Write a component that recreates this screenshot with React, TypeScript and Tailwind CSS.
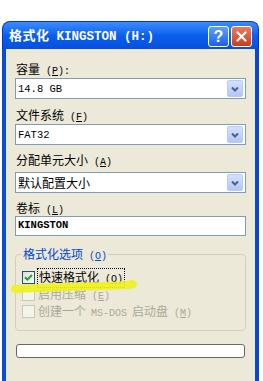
import type { ReactNode } from "react";

const cjk = '"Noto Sans CJK SC", "Noto Sans", sans-serif';
const mono = '"Liberation Mono", "Noto Sans CJK SC", monospace';

function Acc({ k, colon = false }: { k: string; colon?: boolean }) {
  return (
    <span className="text-[10px]" style={{ fontFamily: mono }}>
      {" ("}
      <span className="underline underline-offset-1">{k}</span>
      {")"}
      {colon ? ":" : ""}
    </span>
  );
}

function Label({ children }: { children: ReactNode }) {
  return (
    <div className="h-[14px] leading-[14px] text-[12px] text-black pl-[1px]" style={{ fontFamily: cjk }}>
      {children}
    </div>
  );
}

function Combo({ value, cjkText = false }: { value: string; cjkText?: boolean }) {
  return (
    <div className="flex items-center h-[21px] border border-[#7F9DB9] bg-white pl-[2px] pr-[2px]">
      <span
        className={cjkText ? "flex-1 text-[12px] leading-[14px]" : "flex-1 text-[10.5px] leading-[14px]"}
        style={{ fontFamily: cjkText ? cjk : mono }}
      >
        {value}
      </span>
      <div className="w-[16px] h-[17px] rounded-[2px] border border-[#B7CAF5] bg-gradient-to-b from-[#D5E1FD] to-[#B2C7F7] flex items-center justify-center">
        <svg width="8" height="6" viewBox="0 0 8 6">
          <path d="M1 1.5 L4 4.5 L7 1.5" fill="none" stroke="#4D6185" strokeWidth="2" />
        </svg>
      </div>
    </div>
  );
}

function Check({ checked = false, disabled = false }: { checked?: boolean; disabled?: boolean }) {
  return (
    <div
      className={`w-[13px] h-[13px] border flex items-center justify-center ${
        disabled ? "border-[#CAC8BB] bg-[#F5F4EA]" : "border-[#1C5180] bg-gradient-to-br from-[#DCDCD7] to-white"
      }`}
    >
      {checked && (
        <svg width="9" height="9" viewBox="0 0 9 9">
          <path d="M1 4.2 L3.4 6.6 L8 2" fill="none" stroke="#21A121" strokeWidth="2" />
        </svg>
      )}
    </div>
  );
}

export default function App() {
  return (
    <div className="w-[263px] h-[381px] bg-white overflow-hidden pt-[21px] pl-[2px] relative">
      <div className="w-[257px] flex flex-col">
        {/* title bar */}
        <div className="h-[28px] rounded-t-[8px] bg-gradient-to-b from-[#3B8CFF] via-[#0A5FEC] to-[#0550DE] flex items-center pl-[6px] pr-[6px] border-x border-t border-[#0831D9]">
          <div className="flex-1 flex items-baseline text-white font-bold">
            <span className="text-[13px] tracking-[0.5px]" style={{ fontFamily: cjk }}>
              格式化
            </span>
            <span className="text-[12.5px] ml-[7px]" style={{ fontFamily: mono }}>
              KINGSTON (H:)
            </span>
          </div>
          <div className="flex gap-[2px] mt-[2px]">
            <div className="w-[21px] h-[21px] rounded-[3px] border border-white bg-gradient-to-b from-[#5DA0FF] to-[#1E5FE6] flex items-center justify-center text-white text-[16px] font-bold leading-none" style={{ fontFamily: '"Liberation Sans", sans-serif' }}>
              ?
            </div>
            <div className="w-[21px] h-[21px] rounded-[3px] border border-white bg-gradient-to-b from-[#E97B5C] to-[#CC3A14] flex items-center justify-center">
              <svg width="11" height="11" viewBox="0 0 11 11">
                <path d="M1.5 1.5 L9.5 9.5 M9.5 1.5 L1.5 9.5" stroke="white" strokeWidth="2.2" strokeLinecap="round" />
              </svg>
            </div>
          </div>
        </div>

        {/* body */}
        <div className="h-[332px] border-x-[4px] border-l-[#0A4DD6] border-r-[#0A46CF] bg-[#ECE9D8] pt-[13px] px-[9px] flex flex-col">
          <Label>
            容量<Acc k="P" colon />
          </Label>
          <div className="mt-[2px]">
            <Combo value="14.8 GB" />
          </div>

          <div className="mt-[9px]">
            <Label>
              文件系统<Acc k="F" />
            </Label>
          </div>
          <div className="mt-[2px]">
            <Combo value="FAT32" />
          </div>

          <div className="mt-[8px]">
            <Label>
              分配单元大小<Acc k="A" />
            </Label>
          </div>
          <div className="mt-[5px]">
            <Combo value="默认配置大小" cjkText />
          </div>

          <div className="mt-[8px]">
            <Label>
              卷标<Acc k="L" />
            </Label>
          </div>
          <div className="mt-[1px] h-[20px] border border-[#7F9DB9] bg-white pl-[2px] flex items-center">
            <span className="text-[10.5px] font-bold" style={{ fontFamily: mono }}>
              KINGSTON
            </span>
          </div>

          {/* group box */}
          <div className="mt-[18px] h-[77px] rounded-[4px] border border-[#D0D0BF] relative pt-[14px] pl-[6px]">
            <div className="absolute -top-[8px] left-[6px] px-[1px] bg-[#ECE9D8] text-[#0046D5] text-[12px] leading-[14px]" style={{ fontFamily: cjk }}>
              格式化选项<Acc k="O" />
            </div>
            <div className="h-[17px] flex items-center gap-[2px]">
              <Check checked />
              <span className="border border-dotted border-black px-[1px] text-[12px] leading-[15px]" style={{ fontFamily: cjk }}>
                快速格式化<Acc k="Q" />
              </span>
            </div>
            <div className="h-[17px] flex items-center gap-[3px] text-[#ACA899]">
              <Check disabled />
              <span className="text-[12px] leading-[15px]" style={{ fontFamily: cjk }}>
                启用压缩<Acc k="E" />
              </span>
            </div>
            <div className="h-[17px] flex items-center gap-[3px] text-[#ACA899]">
              <Check disabled />
              <span className="text-[12px] leading-[15px]" style={{ fontFamily: cjk }}>
                创建一个
                <span className="text-[10px] mx-[5px]" style={{ fontFamily: mono }}>MS-DOS</span>
                启动盘<Acc k="M" />
              </span>
            </div>
          </div>

          {/* progress bar */}
          <div className="mt-[13px] h-[14px] mx-[1px] rounded-[3px] border border-[#686868] bg-white" />
        </div>
      </div>

      {/* yellow highlighter mark */}
      <svg className="absolute left-0 top-0 pointer-events-none" width="263" height="381">
        <path d="M15 289 Q 60 287 100 286 T 131 284" fill="none" stroke="#EEF21A" strokeWidth="8" strokeLinecap="round" opacity="0.9" />
      </svg>
    </div>
  );
}
